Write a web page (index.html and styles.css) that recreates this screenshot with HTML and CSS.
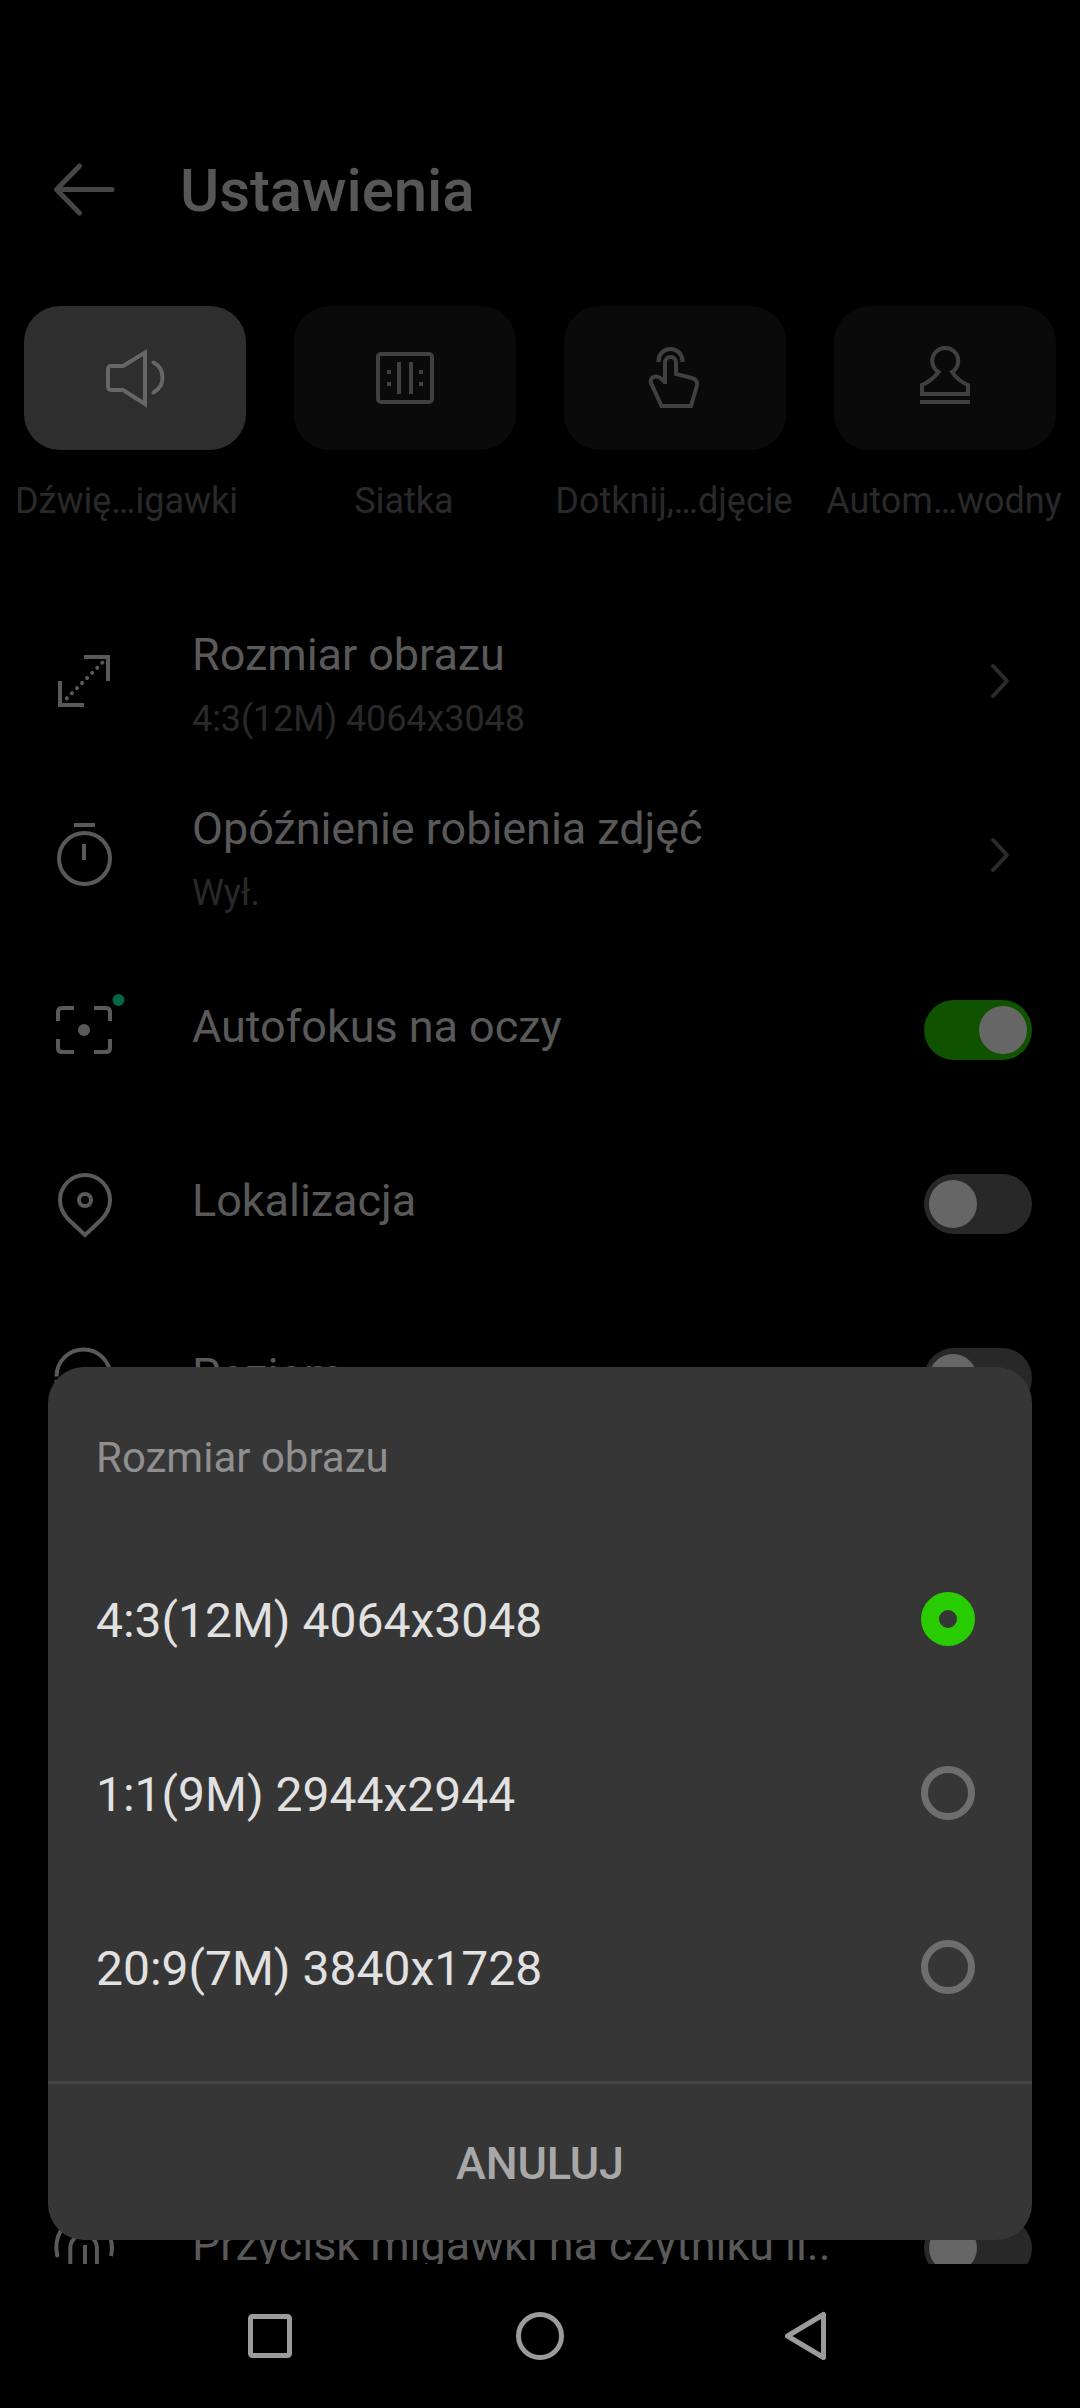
FILE: index.html
```
<!DOCTYPE html>
<html lang="pl">
<head>
    <meta charset="UTF-8">
    <title>Ustawienia</title>
    <link rel="stylesheet" href="styles.css">
</head>
<body>
<div class="screen">
    <header class="header">
        <svg class="icon back" viewBox="0 0 72 72"><path d="M64 36.500H9M31.500 13L8.500 36.500l23 23.500"/></svg>
        <h1>Ustawienia</h1>
    </header>
    <div class="tiles">
        <div class="tile active">
            <div class="tile-box">
                <svg class="icon" viewBox="0 0 72 72"><path d="M24 24L46 10.500V62L24 48H12a3 3 0 0 1-3-3V27a3 3 0 0 1 3-3z"/><path class="round" d="M54.500 20.500a17 17 0 0 1 0 30"/></svg>
            </div>
            <span class="tile-label">Dźwię…igawki</span>
        </div>
        <div class="tile">
            <div class="tile-box">
                <svg class="icon" viewBox="0 0 72 72"><rect x="9" y="12" width="54" height="48" rx="3"/><path d="M30 20v32M42 20v32M20 28v4M20 40v4M52 28v4M52 40v4"/></svg>
            </div>
            <span class="tile-label">Siatka</span>
        </div>
        <div class="tile">
            <div class="tile-box">
                <svg class="icon" viewBox="0 0 72 72"><path d="M19.500 20v-1a12 12 0 0 1 24 0v1"/><path d="M26 42V20.500a5.500 5.500 0 0 1 11 0V32L53 36c4.500 1.300 6 4.500 4.800 8L52 64H22.500L12.500 42c-2-4 0-7 4-7.500 4-.4 7 3 9.500 6z"/></svg>
            </div>
            <span class="tile-label">Dotknij,…djęcie</span>
        </div>
        <div class="tile">
            <div class="tile-box">
                <svg class="icon" viewBox="0 0 72 72"><path d="M29.500 30a13 13 0 1 1 13.500 0c4 6 9 10 16 13v9H13v-9c7-3 12-7 16.500-13zM11 60h50"/></svg>
            </div>
            <span class="tile-label">Autom…wodny</span>
        </div>
    </div>
    <ul class="list">
        <li class="row double">
            <svg class="icon" viewBox="0 0 72 72"><path d="M36 11h24v24M12 35v24h24"/><path class="dots" d="M18.800 52.300L54.300 16.700"/></svg>
            <div class="text">
                <div class="name">Rozmiar obrazu</div>
                <div class="value">4:3(12M) 4064x3048</div>
            </div>
            <svg class="chevron" viewBox="0 0 24 40"><path d="M4 4l14 15L4 34"/></svg>
        </li>
        <li class="row double">
            <svg class="icon" viewBox="0 0 72 72"><circle cx="36.500" cy="38.500" r="25.500"/><path d="M26 5h21M36 24v16"/></svg>
            <div class="text">
                <div class="name">Opóźnienie robienia zdjęć</div>
                <div class="value">Wył.</div>
            </div>
            <svg class="chevron" viewBox="0 0 24 40"><path d="M4 4l14 15L4 34"/></svg>
        </li>
        <li class="row">
            <svg class="icon" viewBox="0 0 72 72"><path d="M26 14H14q-4 0-4 4v9M46 14h12q4 0 4 4v9M26 58H14q-4 0-4-4v-9M46 58h12q4 0 4-4v-9"/><circle class="solid" cx="36" cy="36" r="6"/><circle class="new" cx="70.500" cy="6" r="6"/></svg>
            <div class="text">
                <div class="name">Autofokus na oczy</div>
            </div>
            <div class="toggle on"></div>
        </li>
        <li class="row">
            <svg class="icon" viewBox="0 0 72 72"><path d="M12 32a25 25 0 0 1 50 0c0 8-3 13.500-8 19L37 67 20 51c-5-5.500-8-11-8-19z"/><circle cx="37" cy="32" r="6"/></svg>
            <div class="text">
                <div class="name">Lokalizacja</div>
            </div>
            <div class="toggle"></div>
        </li>
        <li class="row">
            <svg class="icon" viewBox="0 0 72 72"><path d="M8.500 34.500a27 27 0 0 1 54 0M8.500 38a27 27 0 0 0 54 0"/></svg>
            <div class="text">
                <div class="name">Poziom</div>
            </div>
            <div class="toggle"></div>
        </li>
        <li class="row last">
            <svg class="icon" viewBox="0 0 72 72"><path class="round" d="M13 18C8.500 26 7 34 9.300 43.500"/><path d="M58 17c6 9 7 18 5 27M22.300 54V36a13.300 13.300 0 0 1 26.600 0v18M37 33v21"/></svg>
            <div class="text">
                <div class="name">Przycisk migawki na czytniku li..</div>
            </div>
            <div class="toggle"></div>
        </li>
    </ul>
    <div class="sheet">
        <h2>Rozmiar obrazu</h2>
        <div class="option"><span>4:3(12M) 4064x3048</span><i class="radio checked"></i></div>
        <div class="option"><span>1:1(9M) 2944x2944</span><i class="radio"></i></div>
        <div class="option"><span>20:9(7M) 3840x1728</span><i class="radio"></i></div>
        <div class="cancel">ANULUJ</div>
    </div>
    <nav class="navbar">
        <svg viewBox="0 0 60 60"><rect x="10.500" y="10.500" width="39" height="39" rx="2"/></svg>
        <svg viewBox="0 0 60 60"><circle cx="30" cy="30" r="21.500"/></svg>
        <svg viewBox="0 0 60 60"><path d="M43.500 8.500v43L7.500 30z"/></svg>
    </nav>
</div>
</body>
</html>
```
FILE: styles.css
```
* {
    box-sizing: border-box;
}
body {
    margin: 0;
    background: #000;
    font-family: Roboto, sans-serif;
}
.screen {
    position: relative;
    display: flex;
    flex-direction: column;
    width: 1080px;
    height: 2408px;
    overflow: hidden;
}
svg {
    flex: none;
    fill: none;
    stroke: currentColor;
}
.icon {
    width: 72px;
    height: 72px;
    stroke-width: 4;
    overflow: visible;
}
.icon .round {
    stroke-linecap: round;
}
.icon .dots {
    stroke-linecap: round;
    stroke-dasharray: 0.1 7.080;
}
.icon .solid {
    fill: currentColor;
    stroke: none;
}
.icon .new {
    fill: #006644;
    stroke: none;
}
.header {
    display: flex;
    align-items: center;
    gap: 60px;
    height: 150px;
    margin-top: 114px;
    padding-left: 48px;
    color: #575757;
}
.header .back {
    color: #464646;
    stroke-width: 5;
    stroke-linecap: round;
    stroke-linejoin: round;
}
.header h1 {
    margin: 0;
    padding-top: 4px;
    font-size: 60px;
    font-weight: 500;
    line-height: 70px;
    letter-spacing: -0.1px;
}
.tiles {
    display: grid;
    grid-template-columns: repeat(4, 270px);
    height: 331px;
    padding-top: 42px;
}
.tile {
    display: flex;
    flex-direction: column;
    align-items: center;
    color: #404040;
}
.tile-box {
    display: flex;
    align-items: center;
    justify-content: center;
    width: 222px;
    height: 144px;
    border-radius: 36px;
    background: #0a0a0a;
}
.tile-label {
    margin-top: 30px;
    padding-right: 2px;
    font-size: 36px;
    line-height: 42px;
    white-space: nowrap;
    color: #292929;
}
.tile.active {
    color: #666;
}
.tile.active .tile-box {
    background: #2e2e2e;
}
.tile.active .tile-label {
    padding-right: 17px;
}
.list {
    display: grid;
    grid-template-rows: repeat(10, 174px);
    flex: none;
    height: 1669px;
    margin: 0;
    padding: 0;
    overflow: hidden;
    list-style: none;
}
.row {
    display: flex;
    align-items: center;
    padding: 0 48px;
    color: #595959;
}
/* stays at the bottom edge, under the navbar cut */
.row.last {
    grid-row: 10;
}
.row .text {
    flex: 1;
    padding: 0 0 7px 72px;
    white-space: nowrap;
    letter-spacing: -0.05px;
}
.row.double .text {
    padding: 4px 0 0 72px;
}
.name {
    font-size: 45px;
    line-height: 53px;
}
.value {
    margin-top: 17px;
    font-size: 36px;
    line-height: 42px;
    letter-spacing: -0.1px;
    color: #292929;
}
.chevron {
    width: 24px;
    height: 40px;
    margin-right: 19px;
    stroke-width: 4;
    stroke-linecap: round;
    stroke-linejoin: round;
    color: #2b2b2b;
}
.toggle {
    display: flex;
    width: 108px;
    height: 60px;
    padding: 6px 5px;
    border-radius: 30px;
    background: #282828;
}
.toggle::before {
    content: "";
    width: 48px;
    height: 48px;
    border-radius: 50%;
    background: #666;
}
.toggle.on {
    justify-content: flex-end;
    background: #0f5200;
}
.sheet {
    position: absolute;
    left: 48px;
    right: 48px;
    top: 1367px;
    height: 873px;
    border-radius: 36px;
    background: #363636;
}
.sheet h2 {
    height: 166px;
    margin: 0;
    padding: 66px 48px 0;
    font-size: 42px;
    font-weight: 400;
    line-height: 49px;
    color: #8f8f8f;
}
.option {
    display: flex;
    align-items: center;
    justify-content: space-between;
    height: 174px;
    padding: 0 57px 0 48px;
    font-size: 48px;
    color: #e1e1e1;
}
.radio {
    width: 54px;
    height: 54px;
    margin-bottom: 2px;
    border: 7px solid #6e6e6e;
    border-radius: 50%;
}
.radio.checked {
    border: 18px solid #29cc00;
}
.cancel {
    height: 159px;
    margin-top: 26px;
    border-top: 3px solid #474747;
    font-size: 45px;
    font-weight: 500;
    line-height: 160px;
    letter-spacing: -0.2px;
    text-align: center;
    color: #a8a8a8;
}
.navbar {
    display: flex;
    align-items: center;
    justify-content: center;
    gap: 210px;
    height: 144px;
    color: #9b9b9b;
}
.navbar svg {
    width: 60px;
    height: 60px;
    stroke-width: 5;
    stroke-linejoin: round;
}
```
